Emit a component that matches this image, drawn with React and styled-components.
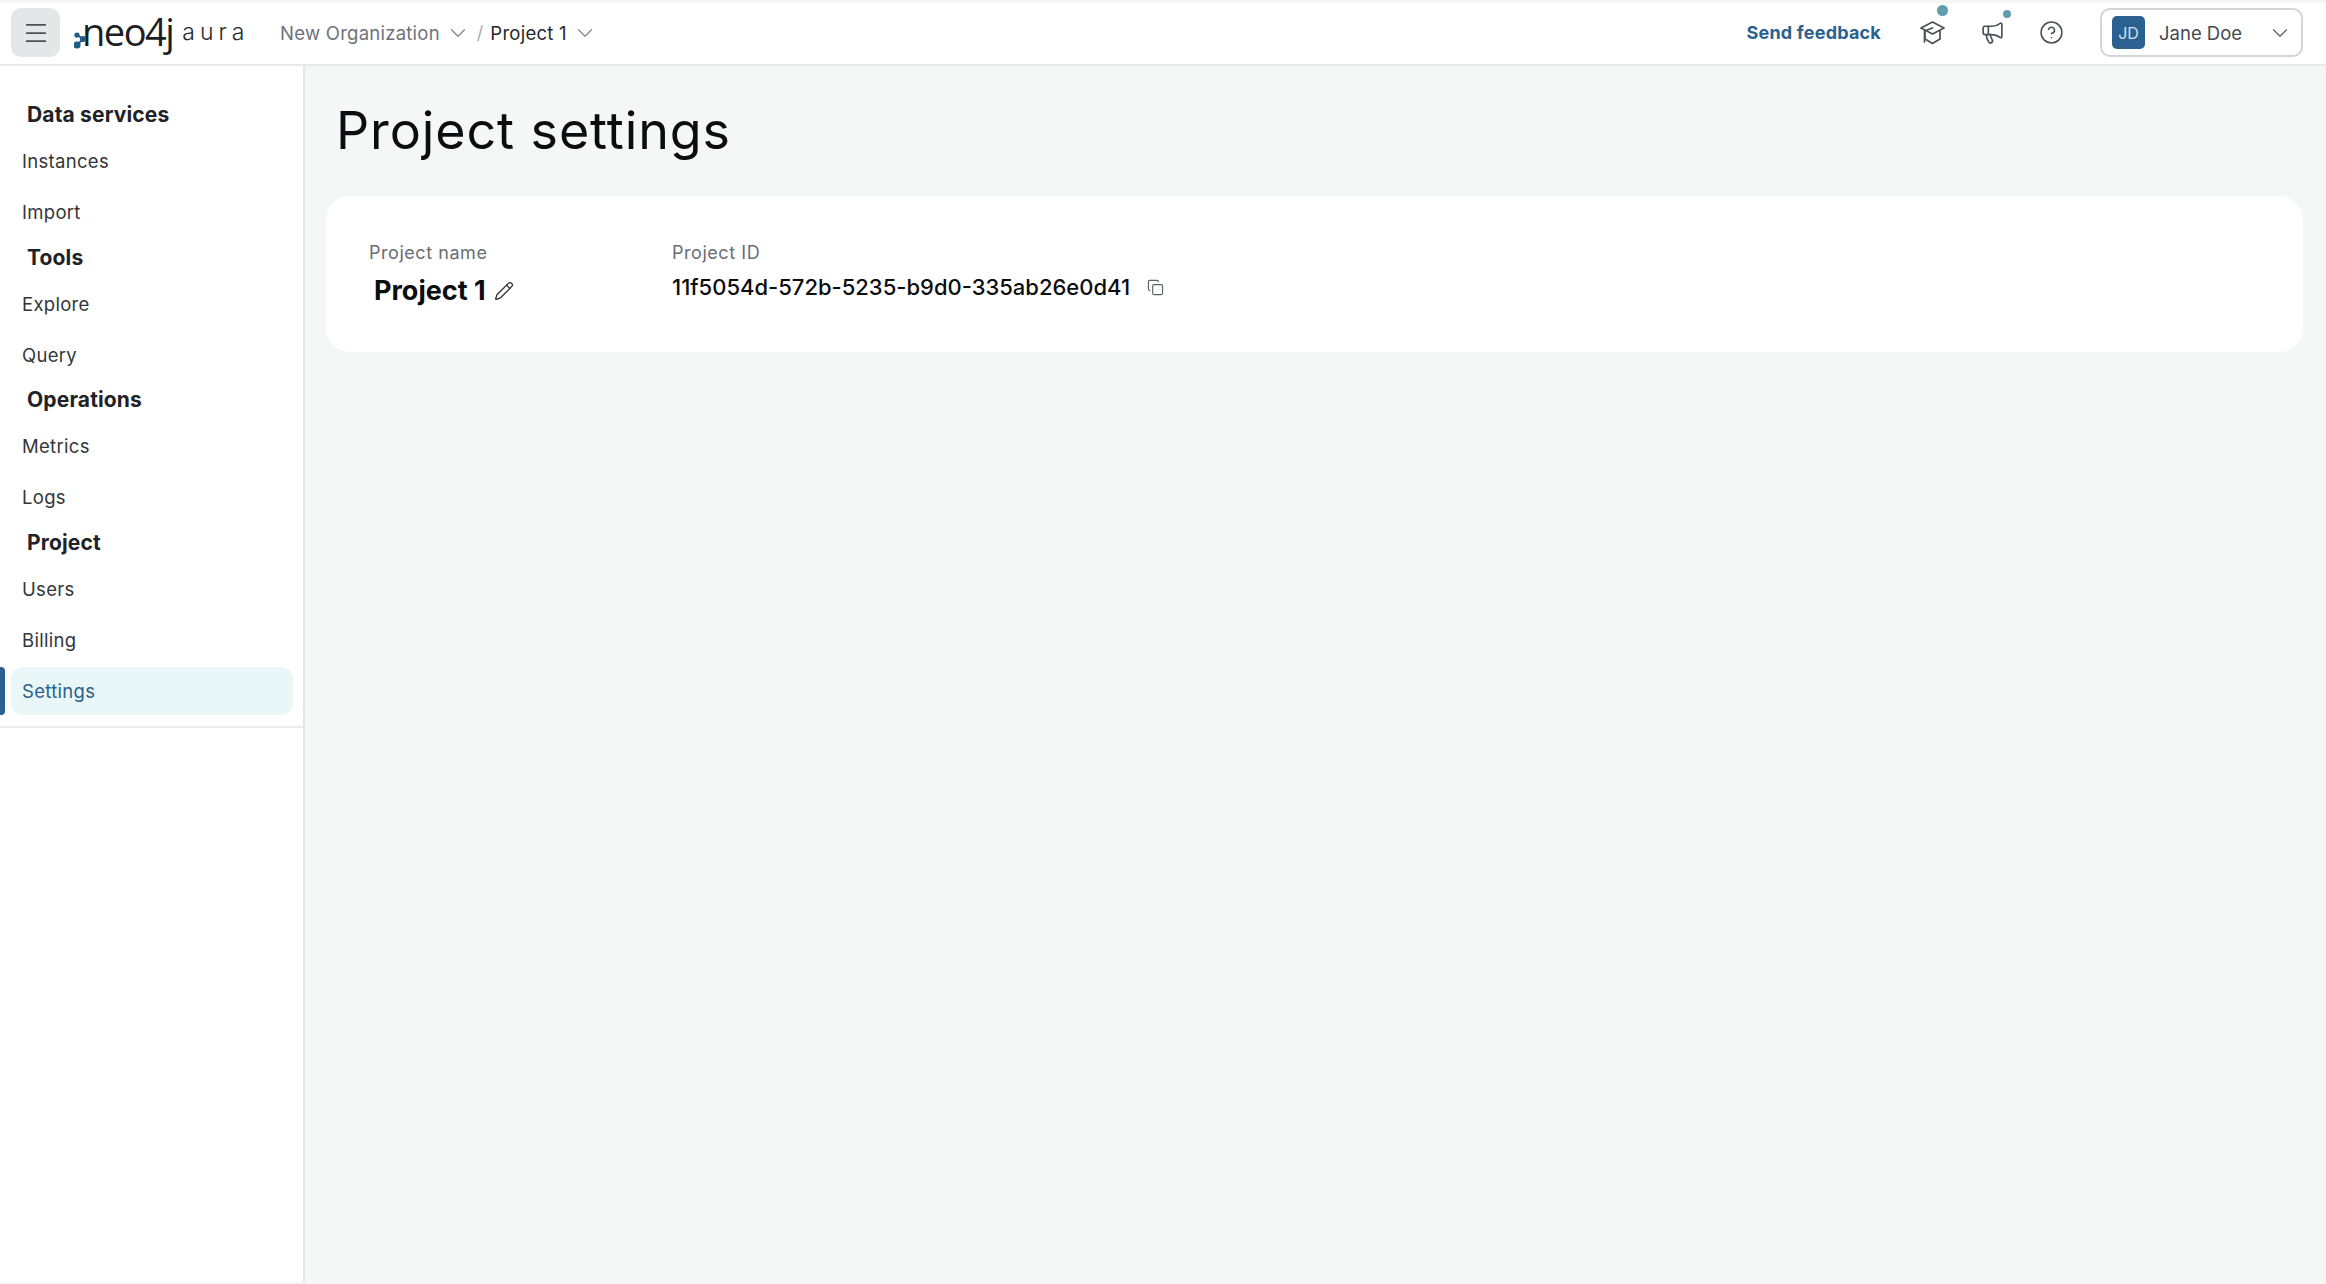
import React from "react";
import styled, { createGlobalStyle } from "styled-components";
import { Menu, ChevronDown, CircleHelp, Copy, Pencil, Megaphone } from "lucide-react";

const Global = createGlobalStyle`
  html, body { margin: 0; padding: 0; height: 100%; background: #f5f7f6; }
  #root { height: 100%; }
  * { box-sizing: border-box; }
  body { font-family: Inter, "Liberation Sans", sans-serif; color: #1f2226; }
`;

const Page = styled.div`
  height: 1284px; padding-top: 3px; display: flex; flex-direction: column; overflow: hidden;
`;
const TopBar = styled.header`
  height: 63px; flex: none; background: #fff; border-bottom: 2px solid #e7e9ea;
  display: flex; align-items: center; padding: 0 23px 2px 11px;
`;
const MenuButton = styled.button`
  width: 49px; height: 49px; border: 0; border-radius: 10px; background: #e4e6e8; color: #4d5157;
  display: flex; align-items: center; justify-content: center; padding: 0;
`;
const LogoWrap = styled.div`
  position: relative; display: flex; align-items: center; margin-left: 15px; width: 191px; height: 49px; padding-left: 7px;
`;
const LogoMark = styled.svg`
  position: absolute; left: -1px; top: 23px;
`;
const LogoWord = styled.span`
  font-family: "Open Sans", sans-serif; font-size: 38px; line-height: 38px; font-weight: 400; letter-spacing: -1.5px; color: #1c1f22; margin-top: -4px;
`;
const LogoSub = styled.span`
  font-family: Inter, sans-serif; font-size: 23px; font-weight: 300; letter-spacing: 5px; color: #26292d; margin-left: 9px; margin-top: -2px;
`;
const Crumb = styled.span`
  font-size: 18.5px; letter-spacing: 0.25px; color: ${p => p.$current ? "#25282c" : "#6e7278"};
`;
const Crumbs = styled.nav`
  display: flex; align-items: center; margin-left: 14px; color: #7a7e84;
`;
const Sep = styled.span`
  font-size: 18px; color: #a9acb0; margin: 0 7px 0 6px;
`;
const Chevron = styled(ChevronDown)`
  margin-left: 5px; flex: none;
`;
const Spacer = styled.div`flex: 1;`;
const Feedback = styled.a`
  font-size: 18px; font-weight: 700; letter-spacing: 0.2px; color: #2a6190; margin-right: 36px;
`;
const IconSlot = styled.div`
  position: relative; width: 30px; height: 30px; color: #4d5157; display: flex; align-items: center; justify-content: center; margin-right: ${p => p.$mr || 0}px;
`;
const Dot = styled.span`
  position: absolute; border-radius: 50%; background: #5e9ead;
  width: ${p => p.$size}px; height: ${p => p.$size}px; left: ${p => p.$x}px; top: ${p => p.$y}px;
`;
const UserButton = styled.div`
  width: 203px; height: 49px; margin-left: 34px; border: 2px solid #d2d4d6; border-radius: 10px; display: flex; align-items: center; padding: 0 8px 0 10px;
`;
const Avatar = styled.div`
  width: 33px; height: 33px; border-radius: 5px; background: #2a6190; color: #cfe0ec; font-size: 16px; display: flex; align-items: center; justify-content: center;
`;
const UserName = styled.span`
  font-size: 18.5px; color: #46494e; margin-left: 14px; flex: 1;
`;
const Body = styled.div`
  flex: 1; display: flex; min-height: 0;
`;
const Sidebar = styled.aside`
  width: 305px; flex: none; background: #fff; border-right: 2px solid #e4e6e6; padding-top: 27.5px; margin-bottom: 2px;
`;
const SideNav = styled.nav`
  padding-bottom: 11px; border-bottom: 2px solid #ececec; position: relative;
`;
const SectionTitle = styled.div`
  font-size: 21px; font-weight: 700; letter-spacing: 0.15px; height: 43.5px; padding: 0 0 1px 27px; display: flex; align-items: center; color: #1f2226;
`;
const NavItem = styled.div`
  position: relative; height: 48px; margin: ${p => p.$first ? "0" : "3px"} 10px 0 11px; border-radius: 12px;
  padding-left: 11px; display: flex; align-items: center; font-size: 18.5px; letter-spacing: 0.3px; color: ${p => p.$active ? "#2a6190" : "#33363a"};
  background: ${p => p.$active ? "#e9f7f9" : "transparent"};
`;
const ActiveBar = styled.span`
  position: absolute; left: -11px; top: 0; bottom: 0; width: 5px; background: #2a6190; border-radius: 0 4px 4px 0;
`;
const Main = styled.main`
  flex: 1; padding: 31px 23px 0 21px;
`;
const Title = styled.h1`
  font-family: Inter, sans-serif; font-size: 52px; line-height: 68px; font-weight: 400; margin: 0 0 31px 10px; color: #0c0d0f; letter-spacing: 0.9px;
`;
const Card = styled.section`
  height: 156px; background: #fff; border-radius: 24px; padding: 43px 43px 0; display: flex;
`;
const Field = styled.div`
  width: ${p => p.$w}px; display: flex; flex-direction: column;
`;
const Label = styled.div`
  font-size: 18px; letter-spacing: 0.55px; line-height: 27px; color: #6a6e75;
`;
const NameRow = styled.div`
  display: flex; align-items: center; margin: 9px 0 0 5px; gap: 8px;
`;
const Name = styled.span`
  font-size: 27px; line-height: 32px; font-weight: 700; color: #0c0d0f;
`;
const IdRow = styled.div`
  display: flex; align-items: center; margin-top: 5px; gap: 17px;
`;
const IdValue = styled.span`
  font-size: 22px; line-height: 32px; font-weight: 500; color: #0c0d0f;
`;
const Muted = styled.span`color: #5c6066; display: flex;`;

const Hat = () => (
  <svg width="27" height="27" viewBox="0 0 27 27" fill="none" stroke="currentColor" strokeWidth="1.7" strokeLinejoin="round" strokeLinecap="round">
    <path d="M13.5 3 25 9l-11.5 6L2 9z" />
    <path d="M6 12v8l7.5 4.5L21 20v-8" />
    <path d="M13.5 9 5.5 12v11" />
  </svg>
);

const Logo = () => (
  <LogoWrap>
    <LogoMark width="22" height="24" viewBox="0 0 22 24">
      <g fill="#1f5c85" stroke="#1f5c85">
        <path d="M3 4 9 8 3 14" fill="none" strokeWidth="1.8" />
        <circle cx="3" cy="4" r="2.6" stroke="none" />
        <circle cx="9" cy="8" r="3" stroke="none" />
        <circle cx="3" cy="14" r="3.6" stroke="none" />
      </g>
    </LogoMark>
    <LogoWord>neo4j</LogoWord>
    <LogoSub>aura</LogoSub>
  </LogoWrap>
);

const sections = [
  { title: "Data services", items: ["Instances", "Import"] },
  { title: "Tools", items: ["Explore", "Query"] },
  { title: "Operations", items: ["Metrics", "Logs"] },
  { title: "Project", items: ["Users", "Billing", "Settings"] },
];

export default function App() {
  return (
    <Page>
      <Global />
      <TopBar>
        <MenuButton><Menu size={28} strokeWidth={1.5} /></MenuButton>
        <Logo />
        <Crumbs>
          <Crumb>New Organization</Crumb>
          <Chevron size={26} strokeWidth={1} />
          <Sep>/</Sep>
          <Crumb $current>Project 1</Crumb>
          <Chevron size={26} strokeWidth={1} />
        </Crumbs>
        <Spacer />
        <Feedback>Send feedback</Feedback>
        <IconSlot $mr={30}><Hat /><Dot $size={11} $x={20} $y={-13} /></IconSlot>
        <IconSlot $mr={29}><Megaphone size={25} strokeWidth={1.6} /><Dot $size={8} $x={26} $y={-8} /></IconSlot>
        <IconSlot><CircleHelp size={25} strokeWidth={1.5} /></IconSlot>
        <UserButton>
          <Avatar>JD</Avatar>
          <UserName>Jane Doe</UserName>
          <ChevronDown size={26} strokeWidth={1} color="#55585d" />
        </UserButton>
      </TopBar>
      <Body>
        <Sidebar>
          <SideNav>
            {sections.map(s => (
              <React.Fragment key={s.title}>
                <SectionTitle>{s.title}</SectionTitle>
                {s.items.map((it, i) => (
                  <NavItem key={it} $first={i === 0} $active={it === "Settings"}>
                    {it === "Settings" && <ActiveBar />}
                    {it}
                  </NavItem>
                ))}
              </React.Fragment>
            ))}
          </SideNav>
        </Sidebar>
        <Main>
          <Title>Project settings</Title>
          <Card>
            <Field $w={303}>
              <Label>Project name</Label>
              <NameRow>
                <Name>Project 1</Name>
                <Pencil size={20} strokeWidth={1.5} color="#2b2d30" />
              </NameRow>
            </Field>
            <Field $w={600}>
              <Label>Project ID</Label>
              <IdRow>
                <IdValue>11f5054d-572b-5235-b9d0-335ab26e0d41</IdValue>
                <Muted><Copy size={17} strokeWidth={1.6} /></Muted>
              </IdRow>
            </Field>
          </Card>
        </Main>
      </Body>
    </Page>
  );
}
